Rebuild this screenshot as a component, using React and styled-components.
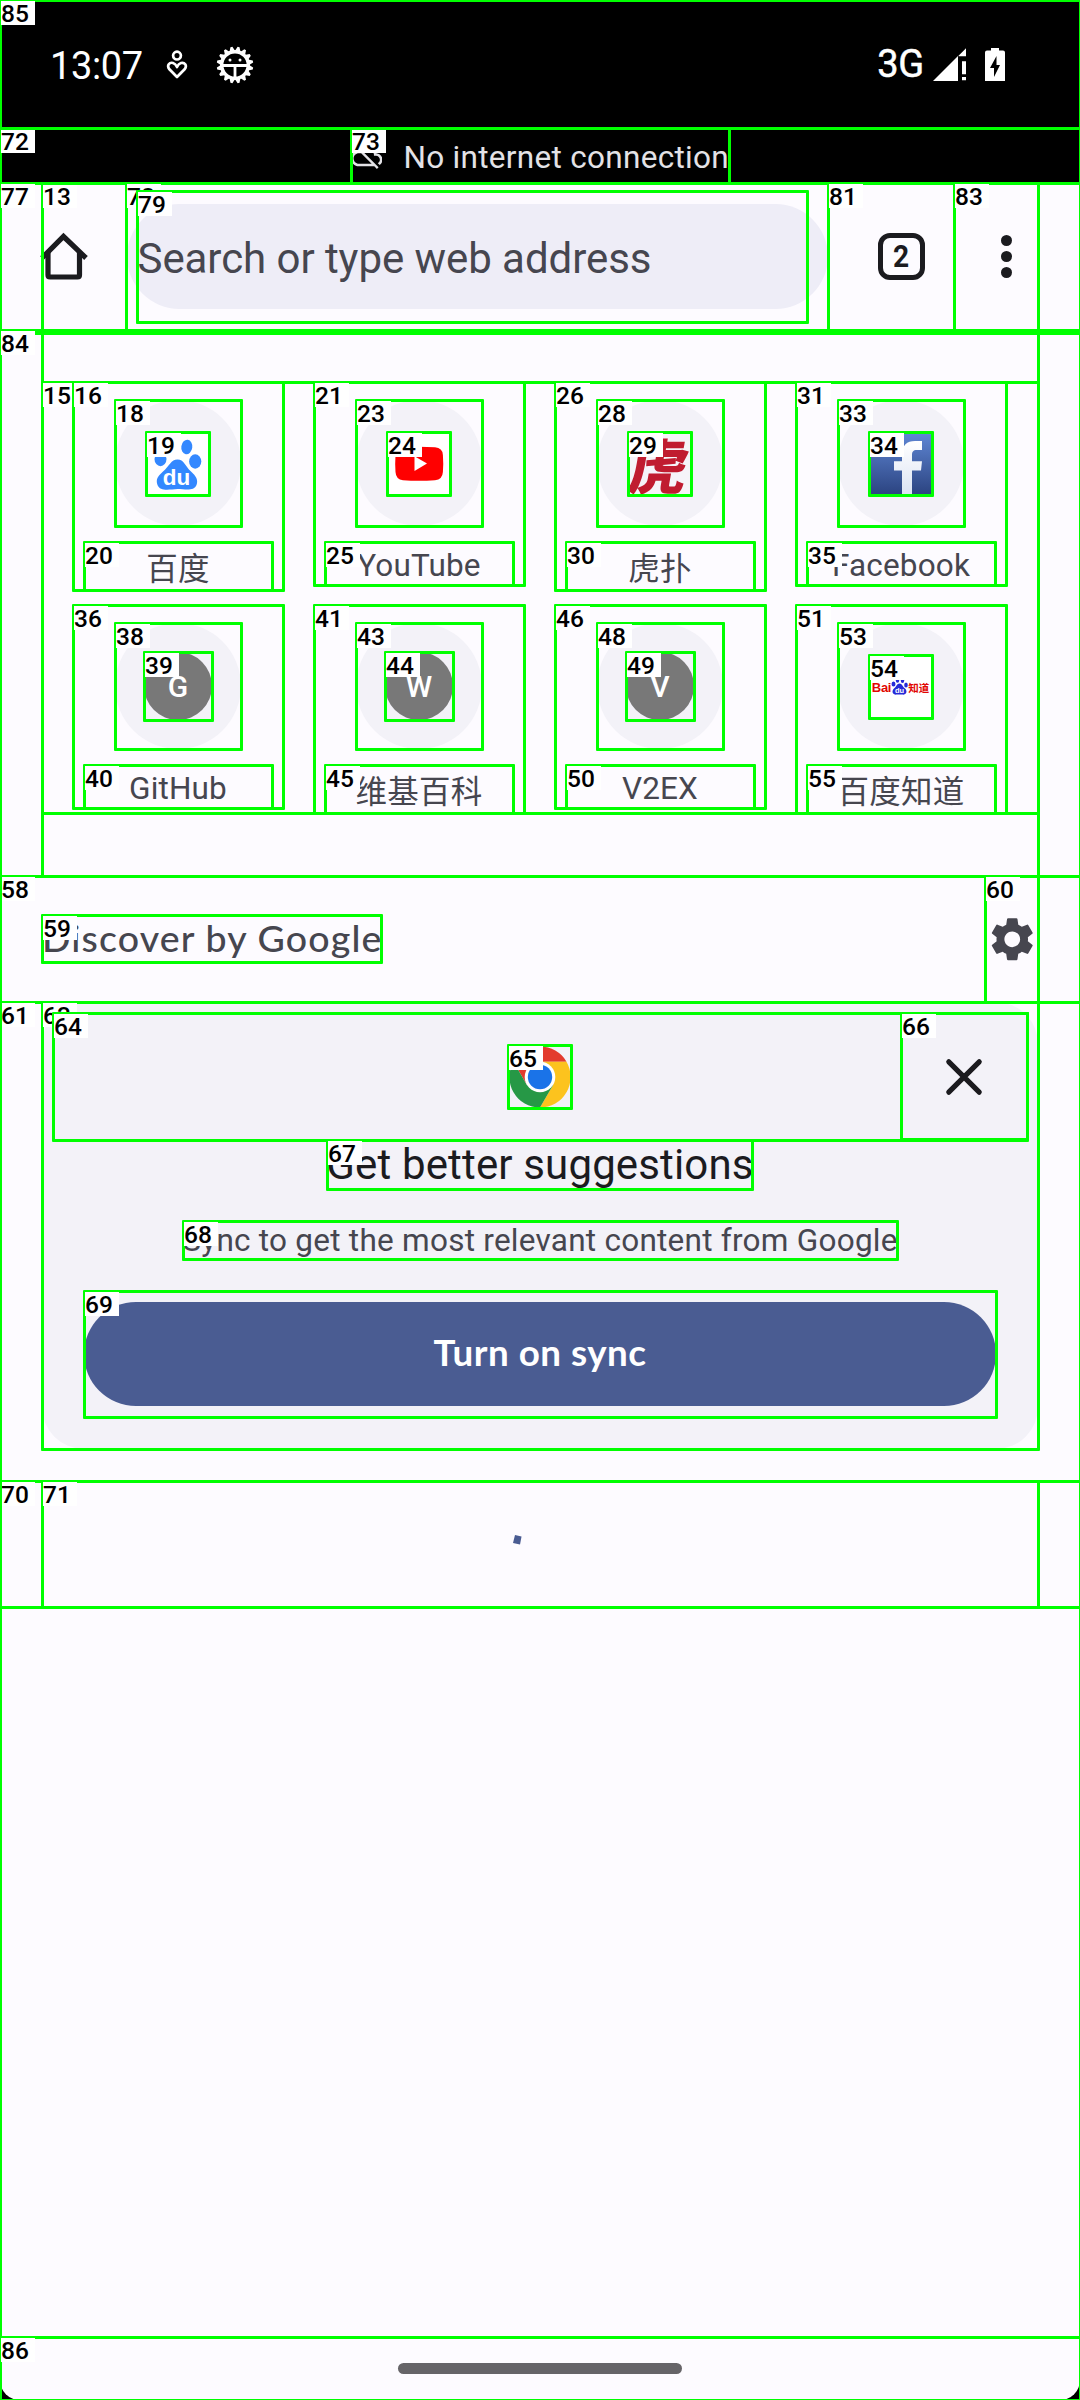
import React from "react";
import styled, { createGlobalStyle } from "styled-components";
import { MdSettings } from "react-icons/md";

const GlobalStyle = createGlobalStyle`
  * { box-sizing: border-box; }
  html, body { margin: 0; padding: 0; background: #000; }
  body { font-family: Roboto, "Noto Sans CJK SC", sans-serif; }
  svg { display: block; flex: none; }
`;

const Screen = styled.div`
  position: relative;
  width: 1080px;
  height: 2400px;
  overflow: hidden;
  display: flex;
  flex-direction: column;
  background: #000;
`;

const StatusBar = styled.header`
  height: 128px;
  flex: none;
  display: flex;
  align-items: center;
  padding: 4px 74px 0 50px;
  color: #fff;
`;
const Clock = styled.span`
  font-size: 38px;
  line-height: 44px;
  width: 116px;
  letter-spacing: -0.4px;
`;
const StatusIcons = styled.div`
  display: flex;
  align-items: center;
  gap: 28px;
  flex: 1;
  padding-bottom: 2px;
`;
const Network = styled.span`
  font-size: 38px;
  line-height: 44px;
  font-weight: 400;
  -webkit-text-stroke: 0.5px #fff;
  letter-spacing: -0.2px;
  margin: -3px 9px 0 0;
`;
const StatusRight = styled.div`
  display: flex;
  align-items: center;
  padding-bottom: 2px;
`;

const OfflineBar = styled.div`
  height: 55px;
  flex: none;
  display: flex;
  align-items: center;
  justify-content: center;
  gap: 21px;
  color: #e3e2e6;
`;
const OfflineText = styled.span`
  font-size: 31.5px;
  line-height: 37px;
  padding-top: 4px;
  letter-spacing: 0.3px;
`;

const Page = styled.main`
  flex: 1;
  display: flex;
  flex-direction: column;
  background: #fdfbff;
  border-radius: 0 0 20px 20px;
`;

const Toolbar = styled.div`
  height: 147px;
  flex: none;
  display: flex;
  align-items: center;
  padding: 0 42px 0 40px;
`;
const HomeButton = styled.div`
  width: 87px;
  height: 53px;
`;
const Omnibox = styled.div`
  width: 701px;
  height: 105px;
  border-radius: 53px;
  background: #eeedf7;
  display: flex;
  align-items: center;
  padding: 3px 0 0 10.5px;
  font-size: 42px;
  color: #46464f;
  letter-spacing: -0.06px;
`;
const TabSwitcher = styled.div`
  width: 47px;
  height: 47px;
  margin-left: 50px;
  border: 5px solid #1b1b1f;
  border-radius: 12px;
  display: flex;
  align-items: center;
  justify-content: center;
  color: #1b1b1f;
`;
const TabCount = styled.span`
  font-size: 32px;
  line-height: 37px;
  font-weight: 700;
  transform: scaleX(0.88);
`;
const Menu = styled.div`
  margin-left: auto;
  width: 63px;
  display: flex;
  flex-direction: column;
  align-items: center;
  gap: 5px;
`;
const Dot = styled.i`
  width: 11px;
  height: 11px;
  border-radius: 50%;
  background: #1b1b1f;
`;

const Tiles = styled.section`
  display: grid;
  grid-template-columns: repeat(4, 210px);
  grid-auto-rows: 223px;
  column-gap: 31px;
  padding: 52px 0 0 73px;
  height: 546px;
  flex: none;
`;
const Tile = styled.div`
  display: flex;
  flex-direction: column;
  align-items: center;
  padding-top: 18px;
`;
const Halo = styled.div`
  width: 126px;
  height: 126px;
  border-radius: 50%;
  background: #f3f2f8;
  display: flex;
  align-items: center;
  justify-content: center;
`;
const TileLabel = styled.div`
  font-size: 31.5px;
  line-height: 36px;
  margin-top: ${(p) => (p.$cjk ? 26 : 22)}px;
  letter-spacing: ${(p) => (p.$cjk ? 0.2 : 0.15)}px;
  white-space: nowrap;
  color: #46464f;
`;
const Favicon = styled.div`
  width: 63px;
  height: 63px;
  margin: 1px 1px 0 0;
  overflow: hidden;
  display: flex;
  align-items: center;
  justify-content: center;
  background: ${(p) => p.$bg || "#fff"};
`;
const Monogram = styled.div`
  width: 68px;
  height: 68px;
  border-radius: 50%;
  background: #787878;
  color: #fff;
  font-size: 30px;
  font-weight: 500;
  line-height: 69px;
  text-align: center;
`;
const TigerGlyph = styled.span`
  font-family: "Noto Sans CJK SC", sans-serif;
  font-weight: 900;
  font-size: 59px;
  line-height: 63px;
  color: #c01c30;
  transform: skewX(-10deg);
`;
const Zhidao = styled.div`
  display: flex;
  align-items: flex-end;
  height: 17px;
  color: #e10602;
  font-weight: 700;
`;
const ZhidaoLatin = styled.span`
  font-family: "Liberation Sans", sans-serif;
  font-size: 13px;
  line-height: 14px;
  letter-spacing: -0.3px;
`;
const ZhidaoHan = styled.span`
  font-family: "Noto Sans CJK SC", sans-serif;
  font-size: 10.5px;
  line-height: 14px;
`;

const FeedHeader = styled.div`
  height: 126px;
  flex: none;
  display: flex;
  align-items: center;
  justify-content: space-between;
  padding: 0 42px;
  color: #46464f;
`;
const FeedTitle = styled.span`
  font-family: Lato, sans-serif;
  font-weight: 500;
  font-size: 37.5px;
  line-height: 44px;
  padding-bottom: 3px;
  letter-spacing: 1.15px;
`;

const Card = styled.section`
  width: 996px;
  height: 447px;
  flex: none;
  margin: 0 42px 32px;
  padding: 11px 11px 0;
  border-radius: 42px;
  background: #f3f2f8;
  display: flex;
  flex-direction: column;
  align-items: center;
`;
const CardTop = styled.div`
  width: 100%;
  height: 127px;
  display: grid;
  grid-template-columns: 126px 1fr 126px;
  align-items: center;
  justify-items: center;
`;
const CardTitle = styled.h2`
  margin: 0;
  height: 49px;
  font-size: 42px;
  line-height: 49px;
  font-weight: 400;
  color: #1b1b1f;
  letter-spacing: 0.15px;
`;
const CardText = styled.p`
  margin: 33px 0 42px;
  font-size: 31.5px;
  line-height: 38px;
  color: #46464f;
  letter-spacing: 0.25px;
`;
const SyncButton = styled.div`
  width: 912px;
  height: 104px;
  border-radius: 52px;
  background: #4a5c92;
  color: #fff;
  display: flex;
  align-items: center;
  justify-content: center;
  padding-bottom: 4px;
  font-family: Lato, sans-serif;
  font-weight: 700;
  font-size: 36.75px;
  letter-spacing: 0.5px;
`;
const Loader = styled.div`
  height: 126px;
  flex: none;
  padding: 54px 0 0 513px;
`;
const NavBar = styled.footer`
  margin-top: auto;
  height: 63px;
  display: flex;
  justify-content: center;
  padding-top: 26px;
`;
const Handle = styled.div`
  width: 284px;
  height: 11px;
  border-radius: 6px;
  background: #666468;
`;

/* Numbered bounds drawn over the screen */
const Overlay = styled.div`
  position: absolute;
  inset: 0;
`;
const Bounds = styled.div`
  position: absolute;
  left: ${(p) => p.$b[0] - 1}px;
  top: ${(p) => p.$b[1] - 1}px;
  width: ${(p) => p.$b[2] - p.$b[0] + 3}px;
  height: ${(p) => p.$b[3] - p.$b[1] + 3}px;
  border: 3px solid #00ff00;
  border-radius: 1px;
`;
const Tag = styled.span`
  position: absolute;
  left: -1px;
  top: -1px;
  width: 34px;
  height: 24px;
  background: #fff;
  color: #000;
  font-size: 24.5px;
  line-height: 25px;
  font-weight: 500;
`;

const bounds = [
  ["", 42, 333, 1038, 876],
  ["13", 42, 183, 126, 330],
  ["15", 42, 382, 1038, 813],
  ["16", 73, 382, 283, 590],
  ["18", 115, 400, 241, 526],
  ["19", 146, 432, 209, 495],
  ["20", 84, 542, 272, 590],
  ["21", 314, 382, 524, 585],
  ["23", 356, 400, 482, 526],
  ["24", 387, 432, 450, 495],
  ["25", 325, 542, 513, 585],
  ["26", 555, 382, 765, 590],
  ["28", 597, 400, 723, 526],
  ["29", 628, 432, 691, 495],
  ["30", 566, 542, 754, 590],
  ["31", 796, 382, 1006, 585],
  ["33", 838, 400, 964, 526],
  ["34", 869, 432, 932, 495],
  ["35", 807, 542, 995, 585],
  ["36", 73, 605, 283, 808],
  ["38", 115, 623, 241, 749],
  ["39", 144, 652, 212, 720],
  ["40", 84, 765, 272, 808],
  ["41", 314, 605, 524, 813],
  ["43", 356, 623, 482, 749],
  ["44", 385, 652, 453, 720],
  ["45", 325, 765, 513, 813],
  ["46", 555, 605, 765, 808],
  ["48", 597, 623, 723, 749],
  ["49", 626, 652, 694, 720],
  ["50", 566, 765, 754, 808],
  ["51", 796, 605, 1006, 813],
  ["53", 838, 623, 964, 749],
  ["54", 869, 655, 932, 718],
  ["55", 807, 765, 995, 813],
  ["58", 0, 876, 1080, 1002],
  ["59", 42, 915, 381, 962],
  ["60", 985, 876, 1038, 1002],
  ["61", 0, 1002, 1080, 1481],
  ["63", 42, 1002, 1038, 1449],
  ["64", 53, 1013, 1027, 1140],
  ["65", 508, 1045, 571, 1108],
  ["66", 901, 1013, 1027, 1139],
  ["67", 327, 1140, 752, 1189],
  ["68", 183, 1221, 897, 1259],
  ["69", 84, 1291, 996, 1417],
  ["70", 0, 1481, 1080, 1607],
  ["71", 42, 1481, 1038, 1607],
  ["72", 0, 128, 1080, 183],
  ["73", 351, 128, 729, 183],
  ["77", 0, 183, 1080, 333],
  ["78", 126, 183, 828, 330],
  ["79", 137, 191, 807, 322],
  ["81", 828, 183, 954, 330],
  ["83", 954, 183, 1038, 330],
  ["84", 0, 330, 1080, 2337],
  ["85", 0, 0, 1080, 128],
  ["86", 0, 2337, 1080, 2400],
];

function CareIcon() {
  return (
    <svg width="22" height="30" viewBox="0 0 22 30" fill="none" stroke="#fff" strokeWidth="2.7">
      <circle cx="11" cy="5.6" r="3.9" />
      <path d="M11 27 L3.4 19.3 C0.4 15.6 3.6 11.9 7 13 C9 13.6 10.2 15.2 11 17 C11.8 15.2 13 13.6 15 13 C18.4 11.9 21.6 15.6 18.6 19.3 Z" strokeLinejoin="round" />
    </svg>
  );
}

function BugIcon() {
  const teeth = Array.from({ length: 16 }, (_, i) => i * 22.5 + 11.25);
  return (
    <svg width="38" height="38" viewBox="-19 -19 38 38">
      {teeth.map((a) => (
        <path key={a} d="M-3.2 -13 L-1 -18.3 H1 L3.2 -13 Z" fill="#fff" transform={`rotate(${a})`} />
      ))}
      <circle r="13.3" fill="#000" stroke="#fff" strokeWidth="3.4" />
      <path d="M-13 0.5 H13 M0 0.5 V14" stroke="#fff" strokeWidth="2.8" />
      <circle cx="-5" cy="-5" r="1.5" fill="#fff" />
      <circle cx="5" cy="-5" r="1.5" fill="#fff" />
    </svg>
  );
}

function SignalBattery() {
  return (
    <svg width="73" height="34" viewBox="0 0 73 34" fill="#fff">
      <path d="M0 33 L25 8 V33 Z M25.5 7.8 L33 0.3 V8.3 H25.5 Z M29 13.3 H33 V26.3 H29 Z M29 29 H33 V32.3 H29 Z" />
      <path d="M58 0 H66 V2.5 H70 Q72 2.5 72 4.5 V33 H52 V4.5 Q52 2.5 54 2.5 H58 Z" />
      <path d="M63.5 8 L57 20 H61 V29 L67 17 H63.5 Z" fill="#000" />
    </svg>
  );
}

function CloudOff() {
  return (
    <svg width="31.5" height="31.5" viewBox="0 0 24 24" fill="currentColor">
      <path d="M19.35 10.04C18.67 6.59 15.64 4 12 4c-1.48 0-2.85.43-4.01 1.17l1.46 1.46C10.21 6.23 11.08 6 12 6c3.04 0 5.5 2.46 5.5 5.5v.5H19c1.66 0 3 1.34 3 3 0 1.13-.64 2.11-1.56 2.62l1.45 1.45C23.16 18.16 24 16.68 24 15c0-2.64-2.05-4.78-4.65-4.96zM3 5.27l2.75 2.74C2.56 8.15 0 10.77 0 14c0 3.31 2.69 6 6 6h11.73l2 2L21 20.73 4.27 4 3 5.27zM7.73 10l8 8H6c-2.21 0-4-1.79-4-4s1.79-4 4-4h1.73z" />
    </svg>
  );
}

function HomeIcon() {
  return (
    <svg width="48" height="52" viewBox="0 0 48 52" fill="none" stroke="#1b1b1f">
      <path d="M2 28 L23.500 6.500 L46 28" strokeWidth="5.200" />
      <path d="M8 22 V45 Q8 47 10 47 H37.500 Q39.500 47 39.500 45 V22" strokeWidth="5.200" />
    </svg>
  );
}

function BaiduPaw() {
  return (
    <svg width="63" height="63" viewBox="0 0 63 63" fill="#3388ff">
      <ellipse cx="14.500" cy="27" rx="6" ry="7.200" />
      <ellipse cx="27" cy="15" rx="5.500" ry="7.300" />
      <ellipse cx="40.800" cy="15" rx="5.500" ry="7.300" transform="rotate(8 40.800 15)" />
      <ellipse cx="49.200" cy="29.500" rx="6.100" ry="7.200" />
      <path d="M31.500 27.500 C38 27.500 39 34 45 39.500 C50 44 52.500 48 50.500 53 C48 59 41 57.500 31.500 57 C23 57.500 14 59.500 11.500 53 C9.500 47 12 44 17 39.500 C23.500 34 25 27.500 31.500 27.500 Z" />
      <text x="30.500" y="52.500" textAnchor="middle" fill="#fff" fontFamily="Liberation Sans, sans-serif" fontWeight="700" fontSize="22.500">du</text>
    </svg>
  );
}

function YouTubeMark() {
  return (
    <svg width="63" height="63" viewBox="0 0 63 63">
      <path d="M16 15.300 Q31.500 14.200 48 15.300 Q55.500 15.800 55.900 23 Q56.600 32 55.900 40 Q55.500 47.500 48 48.200 Q31.500 49.500 16 48.200 Q8.900 47.500 8.500 40 Q7.900 32 8.500 23 Q8.900 15.800 16 15.300 Z" fill="#f00" />
      <path d="M27.500 24.300 L40 31.600 L27.500 39 Z" fill="#fff" />
    </svg>
  );
}

function FacebookMark() {
  return (
    <svg width="63" height="63" viewBox="0 0 63 63">
      <defs>
        <linearGradient id="fb" x1="0" y1="0" x2="0" y2="1">
          <stop offset="0" stopColor="#6088d6" />
          <stop offset="1" stopColor="#2b4380" />
        </linearGradient>
        <linearGradient id="ff" x1="0" y1="0" x2="0" y2="1">
          <stop offset="0" stopColor="#fff" />
          <stop offset="1" stopColor="#dbe3f3" />
        </linearGradient>
      </defs>
      <rect width="63" height="63" fill="url(#fb)" />
      <path d="M33 63 V38.500 H25 V29.300 H33 V23 C33 13 38 9 46 9 H53 V18 H48 C44 18 43 20 43 23 V29.300 H53 L52 38.500 H43 V63 Z" fill="url(#ff)" />
    </svg>
  );
}

function MiniPaw() {
  return (
    <svg width="17" height="17" viewBox="0 0 17 17" fill="#2529d8">
      <ellipse cx="2.500" cy="6" rx="2" ry="2.500" />
      <ellipse cx="6.500" cy="2.500" rx="1.700" ry="2.300" />
      <ellipse cx="11.500" cy="2.500" rx="1.700" ry="2.500" />
      <ellipse cx="15" cy="7" rx="1.800" ry="2.500" />
      <path d="M8.500 5.500 C11 5.500 11.500 8.500 14 10.500 C17 13.500 15 17 11.500 16.600 H5.500 C2 17 0 13.500 3 10.500 C5.500 8.500 6 5.500 8.500 5.500 Z" />
      <text x="8.500" y="15" textAnchor="middle" fill="#fff" fontFamily="Liberation Sans, sans-serif" fontWeight="700" fontSize="7.500">du</text>
    </svg>
  );
}

function ChromeMark() {
  return (
    <svg width="62" height="62" viewBox="-31 -31 62 62">
      <path d="M-26.500 -15.300 A30.600 30.600 0 0 1 26.500 -15.300 L0 -15.300 L0 0 L-13.250 7.650 Z" fill="#e33b2e" />
      <path d="M26.500 -15.300 A30.600 30.600 0 0 1 0 30.600 L13.250 7.650 L0 0 L0 -15.300 Z" fill="#fcc31e" />
      <path d="M0 30.600 A30.600 30.600 0 0 1 -26.500 -15.300 L-13.250 7.650 L0 0 L13.250 7.650 Z" fill="#269846" />
      <circle r="15.300" fill="#fff" />
      <circle r="12.200" fill="#1a73e8" />
    </svg>
  );
}

function CloseIcon() {
  return (
    <svg width="40" height="40" viewBox="0 0 40 40" stroke="#1b1b1f" strokeWidth="5.200" strokeLinecap="round">
      <path d="M4.800 4.800 L35.200 35.200 M35.200 4.800 L4.800 35.200" />
    </svg>
  );
}

const sites = [
  { name: "百度", cjk: true, icon: <Favicon><BaiduPaw /></Favicon> },
  { name: "YouTube", icon: <Favicon><YouTubeMark /></Favicon> },
  { name: "虎扑", cjk: true, icon: <Favicon $bg="#f5f4f9"><TigerGlyph>虎</TigerGlyph></Favicon> },
  { name: "Facebook", icon: <Favicon><FacebookMark /></Favicon> },
  { name: "GitHub", icon: <Monogram>G</Monogram> },
  { name: "维基百科", cjk: true, icon: <Monogram>W</Monogram> },
  { name: "V2EX", icon: <Monogram>V</Monogram> },
  {
    name: "百度知道",
    cjk: true,
    icon: (
      <Favicon>
        <Zhidao>
          <ZhidaoLatin>Bai</ZhidaoLatin>
          <MiniPaw />
          <ZhidaoHan>知道</ZhidaoHan>
        </Zhidao>
      </Favicon>
    ),
  },
];

export default function App() {
  return (
    <>
      <GlobalStyle />
      <Screen>
        <StatusBar>
          <Clock>13:07</Clock>
          <StatusIcons>
            <CareIcon />
            <BugIcon />
          </StatusIcons>
          <StatusRight>
            <Network>3G</Network>
            <SignalBattery />
          </StatusRight>
        </StatusBar>
        <OfflineBar>
          <CloudOff />
          <OfflineText>No internet connection</OfflineText>
        </OfflineBar>
        <Page>
          <Toolbar>
            <HomeButton><HomeIcon /></HomeButton>
            <Omnibox>Search or type web address</Omnibox>
            <TabSwitcher><TabCount>2</TabCount></TabSwitcher>
            <Menu><Dot /><Dot /><Dot /></Menu>
          </Toolbar>
          <Tiles>
            {sites.map((s) => (
              <Tile key={s.name}>
                <Halo>{s.icon}</Halo>
                <TileLabel $cjk={s.cjk}>{s.name}</TileLabel>
              </Tile>
            ))}
          </Tiles>
          <FeedHeader>
            <FeedTitle>Discover by Google</FeedTitle>
            <MdSettings size={52.5} />
          </FeedHeader>
          <Card>
            <CardTop>
              <span />
              <ChromeMark />
              <CloseIcon />
            </CardTop>
            <CardTitle>Get better suggestions</CardTitle>
            <CardText>Sync to get the most relevant content from Google</CardText>
            <SyncButton>Turn on sync</SyncButton>
          </Card>
          <Loader>
            <svg width="9" height="10" viewBox="0 0 9 10">
              <path d="M2 0 L8.500 1.500 L7 9.500 L0 8 Z" fill="#4a5c92" />
            </svg>
          </Loader>
          <NavBar><Handle /></NavBar>
        </Page>
        <Overlay>
          {bounds.map(([tag, ...b], i) => (
            <Bounds key={i} $b={b}>{tag && <Tag>{tag}</Tag>}</Bounds>
          ))}
        </Overlay>
      </Screen>
    </>
  );
}
